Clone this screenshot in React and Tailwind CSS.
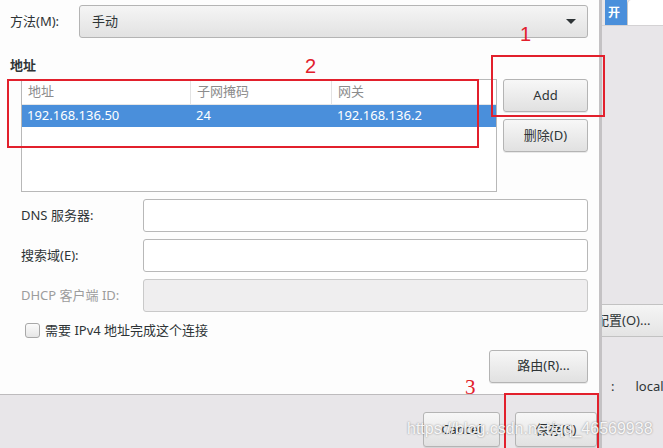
import React from "react";

const btn =
  "flex items-center justify-center rounded-[3px] border border-[#b4b4b4] bg-gradient-to-b from-[#f7f7f7] to-[#e1e1e1] text-[#2e3436] shadow-[0_1px_0_rgba(0,0,0,0.08)]";

function Field({ label, disabled }) {
  return (
    <div className="flex items-center h-[33px]">
      <span className={`w-[122px] ${disabled ? "text-[#9c9c9c]" : "text-[#2e3436]"}`}>{label}</span>
      <div
        className={`flex-1 h-full rounded-[3px] border ${
          disabled ? "border-[#c9c9c9] bg-[#efeeef]" : "border-[#b8b8b8] bg-white"
        }`}
      />
    </div>
  );
}

function RedBox({ className }) {
  return <div className={`absolute border-2 border-[#e2202c] ${className}`} />;
}

export default function App() {
  return (
    <div className="relative w-[663px] h-[448px] overflow-hidden flex bg-[#eae8ea] text-[13px] font-['Noto_Sans','Noto_Sans_CJK_SC',sans-serif]">
      {/* dialog */}
      <div className="w-[602px] flex flex-col border-r-[3px] border-[#c4c2c4]">
        <div className="h-[394px] bg-[#fdfdfd] pr-[11px] flex flex-col">
          {/* method */}
          <div className="flex items-center mt-[5px] h-[33px]">
            <span className="w-[79px] pl-[10px] text-[#2e3436]">方法(M):</span>
            <div className="flex-1 h-full rounded-[3px] border border-[#b4b4b4] bg-gradient-to-b from-[#f5f5f5] to-[#e2e2e2] flex items-center justify-between pl-[12px] pr-[11px] text-[#2e3436]">
              <span>手动</span>
              <span className="w-0 h-0 border-l-[5px] border-r-[5px] border-t-[5px] border-l-transparent border-r-transparent border-t-[#2e3436]" />
            </div>
          </div>

          <div className="mt-[19px] pl-[10px] font-bold text-[#2e3436] leading-[16px]">地址</div>

          {/* address table + buttons */}
          <div className="flex mt-[6px] pl-[21px]">
            <div className="w-[476px] h-[113px] border border-[#b8b8b8] bg-white flex flex-col">
              <div className="flex h-[25px] items-center text-[#8c8c8c] border-b border-[#e6e6e6]">
                <div className="w-[169px] pl-[6px] border-r border-[#e3e3e3] h-full flex items-center">地址</div>
                <div className="w-[141px] pl-[6px] border-r border-[#e3e3e3] h-full flex items-center">子网掩码</div>
                <div className="flex-1 pl-[6px]">网关</div>
              </div>
              <div className="flex h-[22px] items-center bg-[#4a8fdb] text-white">
                <div className="w-[169px] pl-[5px]">192.168.136.50</div>
                <div className="w-[141px] pl-[5px]">24</div>
                <div className="flex-1 pl-[5px]">192.168.136.2</div>
              </div>
            </div>
            <div className="ml-[6px] w-[85px] flex flex-col gap-[7px]">
              <div className={`${btn} h-[33px]`}>Add</div>
              <div className={`${btn} h-[33px]`}>删除(D)</div>
            </div>
          </div>

          {/* fields */}
          <div className="mt-[7px] pl-[21px] flex flex-col gap-[7px]">
            <Field label="DNS 服务器:" />
            <Field label="搜索域(E):" />
            <Field label="DHCP 客户端 ID:" disabled />
          </div>

          <div className="flex items-center mt-[9px] pl-[25px] text-[#2e3436]">
            <span className="w-[15px] h-[15px] rounded-[3px] border border-[#a8a8a8] bg-gradient-to-b from-[#fbfbfb] to-[#e6e6e6]" />
            <span className="ml-[5px]">需要 IPv4 地址完成这个连接</span>
          </div>

          <div className="flex justify-end mt-[9px]">
            <div className={`${btn} w-[99px] h-[33px] pl-[10px]`}>路由(R)...</div>
          </div>
        </div>

        {/* footer */}
        <div className="flex-1 bg-[#e8e6e9] border-t border-[#bdbbbd] flex justify-end items-start pt-[17px] pr-[2px] gap-[15px]">
          <div className={`${btn} w-[77px] h-[35px]`}>Cancel</div>
          <div className={`${btn} w-[82px] h-[35px]`}>保存(S)</div>
        </div>
      </div>

      {/* side panel */}
      <div className="flex-1 flex flex-col bg-[#e8e6e9] overflow-hidden">
        <div className="flex h-[26px] border-b border-[#d4d2d4]">
          <div className="ml-[3px] w-[22px] bg-[#4a8fdb] text-white text-[12px] font-bold flex items-center pl-[3px]">开</div>
          <div className="flex-1 bg-white rounded-tl-[4px] border-l border-[#c8c8c8]" />
        </div>
        <div className="mt-[278px] h-[33px] bg-gradient-to-b from-[#f5f5f5] to-[#e4e4e4] border-y border-[#c2c2c2] flex items-center whitespace-nowrap text-[#2e3436] ml-[-6px]">
          配置(O)...
        </div>
        <div className="mt-[40px] flex whitespace-nowrap text-[#2e3436] ml-[9px]">
          <span>:</span>
          <span className="ml-[21px]">localhost</span>
        </div>
      </div>

      {/* annotations */}
      <RedBox className="left-[491px] top-[55px] w-[114px] h-[62px]" />
      <RedBox className="left-[7px] top-[79px] w-[472px] h-[69px]" />
      <RedBox className="left-[504px] top-[393px] w-[95px] h-[70px]" />
      <span className="absolute left-[520px] top-[24px] text-[20px] leading-none text-[#e2202c] font-['Liberation_Sans',sans-serif]">1</span>
      <span className="absolute left-[305px] top-[56px] text-[20px] leading-none text-[#e2202c] font-['Liberation_Sans',sans-serif]">2</span>
      <span className="absolute left-[465px] top-[377px] text-[21px] leading-none text-[#e2202c] font-['Liberation_Serif',serif]">3</span>

      {/* watermark */}
      <span className="absolute left-[407px] top-[417px] text-[16px] text-white/90 font-['Liberation_Sans',sans-serif] [text-shadow:0_0_2px_rgba(0,0,0,0.45)]">
        https://blog.csdn.net/qq_46569938
      </span>
    </div>
  );
}
